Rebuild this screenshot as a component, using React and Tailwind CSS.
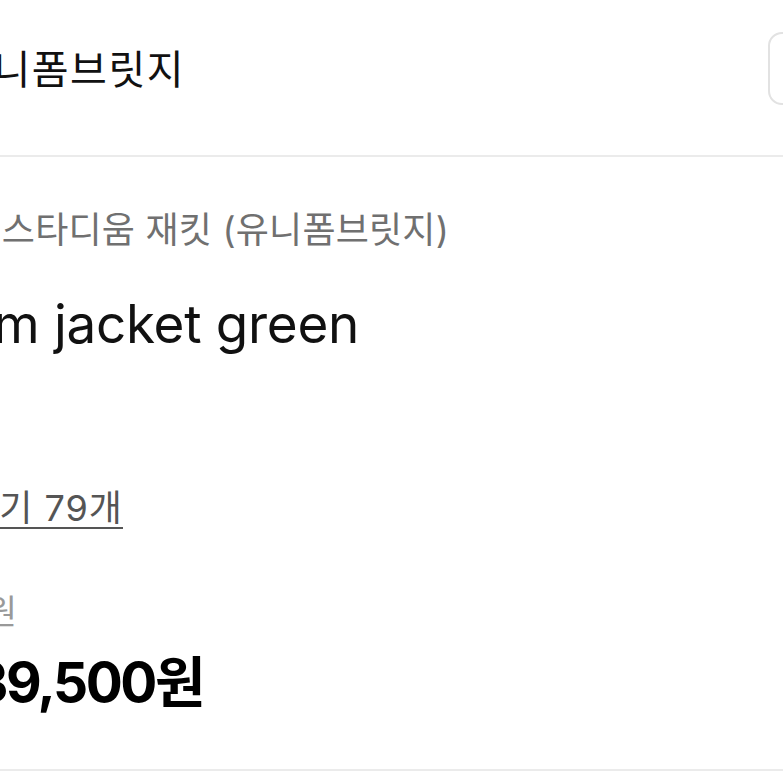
import React from 'react';

const font = { fontFamily: 'Inter, "Noto Sans CJK KR", sans-serif' };

// text that is anchored by its right edge and spills off the left side
const Line = ({ right, className, children }) => (
  <div className="flex justify-end" style={{ width: right }}>
    <span className={`whitespace-nowrap ${className}`}>{children}</span>
  </div>
);

const App = () => {
  return (
    <div className="w-[783px] h-[783px] overflow-hidden bg-white" style={font}>
      <header className="h-[157px] flex items-center justify-between border-b-2 border-[#ebebeb]">
        <div className="-mt-[16px]">
          <Line right={185} className="text-[40px] leading-[44px] text-[#111] tracking-[1.5px]">유니폼브릿지</Line>
        </div>
        <div className="w-[80px] h-[73px] -mr-[65px] -mt-[18px] rounded-[14px] border-2 border-[#e2e2e2] shrink-0"></div>
      </header>

      <section className="flex flex-col">
        <div className="mt-[52px]">
          <Line right={449} className="text-[36px] leading-[42px] text-[#707070] tracking-[0.2px]">
            유니폼브릿지 스타디움 재킷 (유니폼브릿지)
          </Line>
        </div>
        <div className="mt-[41px]">
          <Line right={359} className="text-[53px] leading-[64px] text-[#111] tracking-[-0.3px]">
            Stadium jacket green
          </Line>
        </div>
        <div className="mt-[132px]">
          <Line right={123} className="text-[36px] leading-[40px] text-[#555] tracking-[1px] underline underline-offset-[6px] decoration-2">
            후기 79개
          </Line>
        </div>
        <div className="mt-[64px]">
          <Line right={17} className="text-[34px] leading-[40px] text-[#999]">
            45,000원
          </Line>
        </div>
        <div className="mt-[20px]">
          <Line right={203} className="text-[55px] leading-[60px] font-bold text-black tracking-[-2.5px]">
            39,500원
          </Line>
        </div>
        <div className="mt-[57px] border-b-2 border-[#ebebeb]"></div>
      </section>
    </div>
  );
};

export default App;
